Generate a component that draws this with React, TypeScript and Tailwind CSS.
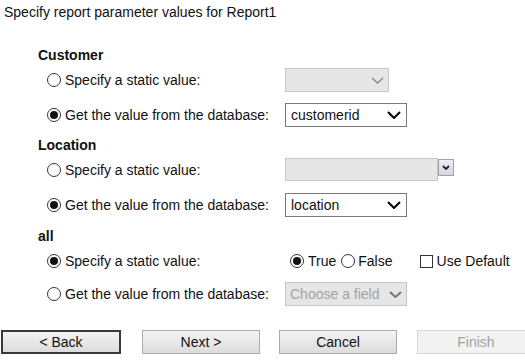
import React from 'react';

type ChevronProps = { color?: string; width?: number; height?: number; stroke?: number };

const Chevron: React.FC<ChevronProps> = ({ color = '#000', width = 14, height = 8, stroke = 2 }) => (
  <svg width={width} height={height} viewBox={`0 0 ${width} ${height}`} className="shrink-0">
    <polyline
      points={`1,1 ${width / 2},${height - 1} ${width - 1},1`}
      fill="none"
      stroke={color}
      strokeWidth={stroke}
    />
  </svg>
);

const Radio: React.FC<{ checked?: boolean }> = ({ checked }) => (
  <span className="w-[14px] h-[14px] rounded-full border border-[#333] bg-white flex items-center justify-center shrink-0">
    {checked && <span className="w-[8px] h-[8px] rounded-full bg-[#111]" />}
  </span>
);

const Checkbox: React.FC = () => (
  <span className="w-[13px] h-[13px] border border-[#333] bg-white shrink-0" />
);

// white dropdown with a value
const Select: React.FC<{ value: string }> = ({ value }) => (
  <div className="w-[122px] h-[24px] border border-[#7a7a7a] bg-white flex items-center justify-between pl-[5px] pr-[5px]">
    <span className="leading-none">{value}</span>
    <Chevron />
  </div>
);

// radio + label cell, fixed width so the controls line up at x=285
const Option: React.FC<{ checked?: boolean; label: string }> = ({ checked, label }) => (
  <div className="w-[238px] flex items-center gap-[4px]">
    <Radio checked={checked} />
    <span>{label}</span>
  </div>
);

const SectionTitle: React.FC<{ children: React.ReactNode }> = ({ children }) => (
  <div className="h-[20px] flex items-center pl-[38px] font-bold">{children}</div>
);

const Row: React.FC<{ className?: string; children: React.ReactNode }> = ({ className = '', children }) => (
  <div className={`h-[24px] flex items-center pl-[47px] ${className}`}>{children}</div>
);

const btn = 'shrink-0 h-[24px] bg-gradient-to-b from-[#f4f4f4] to-[#dcdcdc] text-[#111]';

export default function App() {
  return (
    <div className="w-[525px] h-[364px] bg-white text-[#111] text-[14px] font-['Liberation_Sans',Arial,sans-serif] overflow-hidden">
      <div className="h-[24px] flex items-center pl-[4px]">Specify report parameter values for Report1</div>

      {/* Customer */}
      <div className="mt-[21px]">
        <SectionTitle>Customer</SectionTitle>
        <Row className="mt-[3px]">
          <Option label="Specify a static value:" />
          <div className="w-[104px] h-[24px] border border-[#c6c6c6] bg-[#e6e6e6] flex items-center justify-end pr-[4px]">
            <Chevron color="#8a8a8a" width={13} height={7} stroke={1.5} />
          </div>
        </Row>
        <Row className="mt-[11px]">
          <Option checked label="Get the value from the database:" />
          <Select value="customerid" />
        </Row>
      </div>

      {/* Location */}
      <div className="mt-[8px]">
        <SectionTitle>Location</SectionTitle>
        <Row className="mt-[3px]">
          <Option label="Specify a static value:" />
          <div className="flex items-start h-[24px]">
            <div className="w-[153px] h-[23px] border border-[#c6c6c6] bg-[#e6e6e6]" />
            <div className="w-[16px] h-[17px] mt-[1px] border border-[#a0a0a8] bg-gradient-to-b from-[#eeeef4] to-[#d4d5e0] flex items-center justify-center">
              <Chevron width={8} height={5} stroke={1.8} color="#222" />
            </div>
          </div>
        </Row>
        <Row className="mt-[11px]">
          <Option checked label="Get the value from the database:" />
          <Select value="location" />
        </Row>
      </div>

      {/* all */}
      <div className="mt-[9px]">
        <SectionTitle>all</SectionTitle>
        <Row className="mt-[3px]">
          <Option checked label="Specify a static value:" />
          <div className="flex items-center pl-[5px]">
            <Radio checked />
            <span className="ml-[4px]">True</span>
            <span className="ml-[5px]" />
            <Radio />
            <span className="ml-[3px]">False</span>
            <span className="ml-[27px]" />
            <Checkbox />
            <span className="ml-[4px]">Use Default</span>
          </div>
        </Row>
        <Row className="mt-[9px]">
          <Option label="Get the value from the database:" />
          <div className="w-[122px] h-[24px] border border-[#c6c6c6] bg-[#e6e6e6] flex items-center justify-between pl-[4px] pr-[4px] text-[#a3a3a3]">
            <span className="leading-none">Choose a field</span>
            <Chevron color="#777" width={13} height={7} stroke={2} />
          </div>
        </Row>
      </div>

      {/* wizard buttons */}
      <div className="mt-[24px] flex items-center pl-[1px]">
        <button className={`${btn} w-[120px] border-2 border-[#3a3a3a]`}>&lt; Back</button>
        <button className={`${btn} ml-[21px] w-[118px] border border-[#acacac]`}>Next &gt;</button>
        <button className={`${btn} ml-[19px] w-[118px] border border-[#acacac]`}>Cancel</button>
        <button className="ml-[20px] w-[118px] h-[24px] shrink-0 border border-[#d5d5d5] bg-[#f2f2f2] text-[#a3a3a3]">
          Finish
        </button>
      </div>
    </div>
  );
}
